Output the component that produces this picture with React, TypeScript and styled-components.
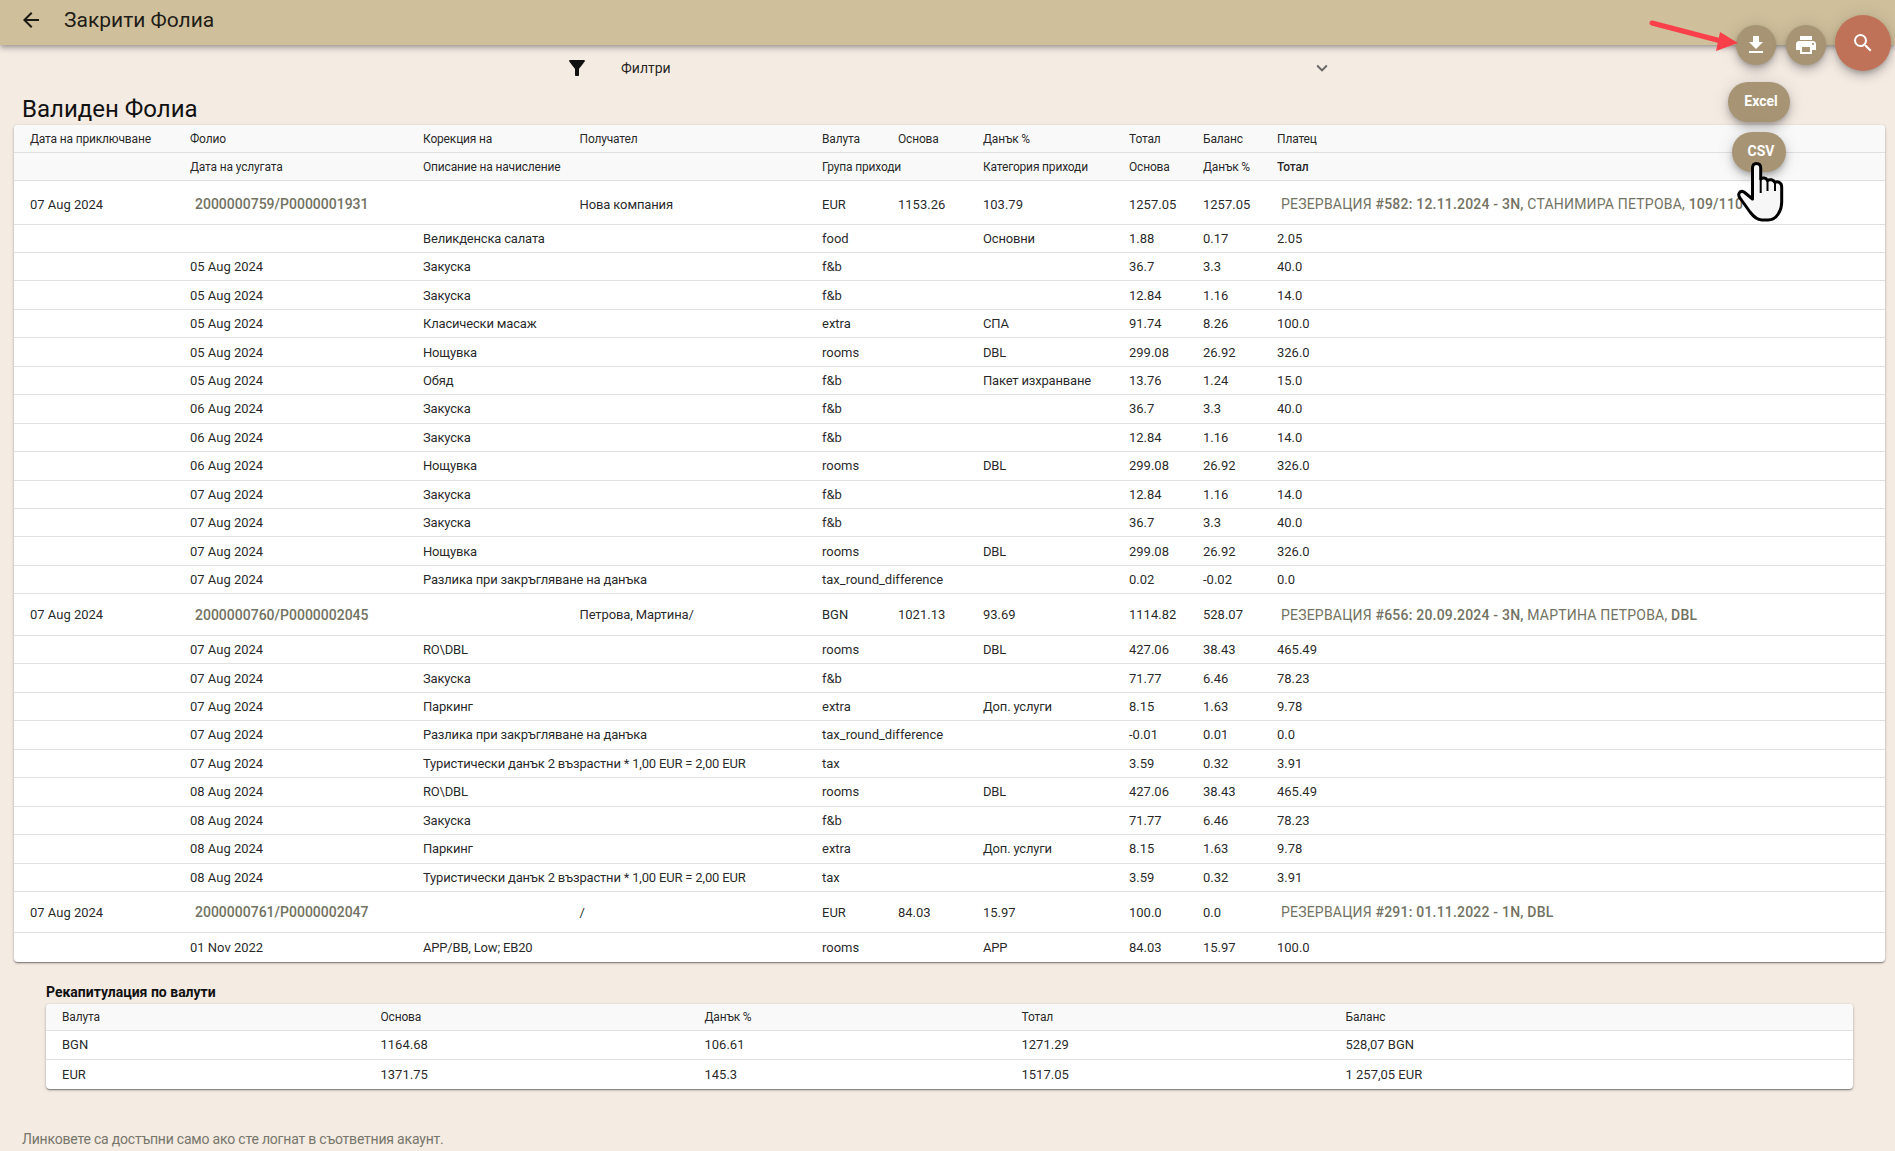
import React from "react";
import styled, { createGlobalStyle } from "styled-components";
import { MdArrowBack, MdFileDownload, MdPrint, MdSearch, MdFilterAlt, MdExpandMore } from "react-icons/md";

const Global = createGlobalStyle`
  html, body { margin: 0; padding: 0; }
  body { background: #f4ebe3; font-family: Roboto, "Noto Sans", sans-serif; color: rgba(0,0,0,.87); overflow: hidden; }
`;
const Page = styled.div`position: relative; width: 1895px; height: 1151px; overflow: hidden;`;
const TopBar = styled.header`
  height: 45px; background: #cfbf9b; display: flex; align-items: flex-start; padding: 8px 0 0 19px; box-sizing: border-box;
  box-shadow: 0 2px 4px -1px rgba(0,0,0,.2), 0 4px 5px 0 rgba(0,0,0,.14), 0 1px 10px 0 rgba(0,0,0,.12);
`;
const BackIcon = styled(MdArrowBack)`font-size: 24px; color: #1c1a14;`;
const TopTitle = styled.h1`margin: 0 0 0 21px; font-size: 21px; line-height: 24px; font-weight: 400; color: rgba(0,0,0,.87);`;
const FilterBar = styled.div`
  display: flex; align-items: center; height: 46px; width: 767px; margin-left: 566px; box-sizing: border-box;
`;
const FilterIcon = styled(MdFilterAlt)`font-size: 24px; color: #111; margin-right: 31px; margin-left: -1px;`;
const FilterLabel = styled.span`flex: 1; font-size: 14px; color: rgba(0,0,0,.87); padding-left: 1px;`;
const Chevron = styled(MdExpandMore)`font-size: 22px; color: #666;`;
const Heading = styled.h2`margin: 3px 0 1px 22px; font-size: 24px; line-height: 30px; font-weight: 400; color: #111;`;
const Card = styled.div`
  margin: ${p => p.$m}; background: #fff; border-radius: 4px; overflow: hidden;
  box-shadow: 0 2px 1px -1px rgba(0,0,0,.2), 0 1px 1px 0 rgba(0,0,0,.14), 0 1px 3px 0 rgba(0,0,0,.3);
`;
const Table = styled.table`width: 100%; table-layout: fixed; border-collapse: separate; border-spacing: 0;`;
const Cell = styled.td`
  padding: 0; font-size: 13px; white-space: nowrap; overflow: visible; border-bottom: 1px solid #e0e0e0; box-sizing: border-box;
  color: rgba(0,0,0,.87); vertical-align: middle; tr:last-child > & { border-bottom: 0; }
  &:first-child { padding-left: 16px; }
`;
const FolioCell = styled(Cell)`padding-top: ${p => p.$pad || 0}px; &:first-child { padding-top: ${p => p.$pad || 0}px; }`;
const TextCell = styled(Cell)`letter-spacing: -0.18px;`;
const FolioTextCell = styled(FolioCell)`letter-spacing: -0.12px;`;
const HeadCell = styled(Cell).attrs({ as: "th" })`
  font-size: 12px; letter-spacing: -0.17px; font-weight: ${p => (p.$strong ? 500 : 400)}; text-align: left; background: #f9f9f9; height: ${p => p.$h || 28}px;
  tr:last-child > & { border-bottom: 1px solid #e0e0e0; }
`;
const FolioLink = styled.a`
  font-size: 14px; font-weight: 500; color: #727262; padding-left: 5px; text-decoration: none;
`;
const Booking = styled.a`
  font-size: 14px; letter-spacing: .2px; color: #727262; padding-left: 4px; b { font-weight: 500; }
`;
const Row = styled.tr`height: ${p => p.$h}px;`;
const SummaryTitle = styled.h3`margin: 21px 0 0 46px; font-size: 14px; line-height: 18px; font-weight: 700; color: #111;`;
const Note = styled.p`margin: 42px 0 0 22px; font-size: 14px; letter-spacing: -0.2px; color: #76766a;`;
const Fab = styled.button`
  position: absolute; left: ${p => p.$x}px; top: ${p => p.$y}px; width: ${p => p.$w}px; height: ${p => p.$h}px;
  border: 0; padding: 0; border-radius: ${p => p.$h / 2}px; background: ${p => p.$bg || "#a69474"}; color: #fff;
  display: flex; align-items: center; justify-content: center;
  box-shadow: 0 3px 5px -1px rgba(0,0,0,.2), 0 6px 10px 0 rgba(0,0,0,.14), 0 1px 18px 0 rgba(0,0,0,.12);
`;
const FabLabel = styled(Fab)`font: 700 14px Roboto, sans-serif; padding: 0 0 2px 4px; box-sizing: border-box;`;
const Overlay = styled.svg`position: absolute; left: ${p => p.$x}px; top: ${p => p.$y}px; pointer-events: none;`;

const cols = [176, 233, 156.5, 242.5, 76, 85, 146, 74, 74, 608];
const scols = [334.5, 324, 317, 324, 507.5];

type D = [string, string, string, string, string, string, string];
type F = { close: string; folio: string; to: string; cur: string; base: string; tax: string; total: string; bal: string; booking: React.ReactNode; h: number; pad?: number; rows: D[] };

const folios: F[] = [
  {
    close: "07 Aug 2024", folio: "2000000759/P0000001931", to: "Нова компания", cur: "EUR", base: "1153.26", tax: "103.79", total: "1257.05", bal: "1257.05", h: 43.5, pad: 4,
    booking: <>РЕЗЕРВАЦИЯ <b>#582: 12.11.2024 - 3N,</b> СТАНИМИРА ПЕТРОВА, <b>109/110</b></>,
    rows: [
      ["", "Великденска салата", "food", "Основни", "1.88", "0.17", "2.05"],
      ["05 Aug 2024", "Закуска", "f&b", "", "36.7", "3.3", "40.0"],
      ["05 Aug 2024", "Закуска", "f&b", "", "12.84", "1.16", "14.0"],
      ["05 Aug 2024", "Класически масаж", "extra", "СПА", "91.74", "8.26", "100.0"],
      ["05 Aug 2024", "Нощувка", "rooms", "DBL", "299.08", "26.92", "326.0"],
      ["05 Aug 2024", "Обяд", "f&b", "Пакет изхранване", "13.76", "1.24", "15.0"],
      ["06 Aug 2024", "Закуска", "f&b", "", "36.7", "3.3", "40.0"],
      ["06 Aug 2024", "Закуска", "f&b", "", "12.84", "1.16", "14.0"],
      ["06 Aug 2024", "Нощувка", "rooms", "DBL", "299.08", "26.92", "326.0"],
      ["07 Aug 2024", "Закуска", "f&b", "", "12.84", "1.16", "14.0"],
      ["07 Aug 2024", "Закуска", "f&b", "", "36.7", "3.3", "40.0"],
      ["07 Aug 2024", "Нощувка", "rooms", "DBL", "299.08", "26.92", "326.0"],
      ["07 Aug 2024", "Разлика при закръгляване на данъка", "tax_round_difference", "", "0.02", "-0.02", "0.0"],
    ],
  },
  {
    close: "07 Aug 2024", folio: "2000000760/P0000002045", to: "Петрова, Мартина/", cur: "BGN", base: "1021.13", tax: "93.69", total: "1114.82", bal: "528.07", h: 41.5,
    booking: <>РЕЗЕРВАЦИЯ <b>#656: 20.09.2024 - 3N,</b> МАРТИНА ПЕТРОВА, <b>DBL</b></>,
    rows: [
      ["07 Aug 2024", "RO\\DBL", "rooms", "DBL", "427.06", "38.43", "465.49"],
      ["07 Aug 2024", "Закуска", "f&b", "", "71.77", "6.46", "78.23"],
      ["07 Aug 2024", "Паркинг", "extra", "Доп. услуги", "8.15", "1.63", "9.78"],
      ["07 Aug 2024", "Разлика при закръгляване на данъка", "tax_round_difference", "", "-0.01", "0.01", "0.0"],
      ["07 Aug 2024", "Туристически данък 2 възрастни * 1,00 EUR = 2,00 EUR", "tax", "", "3.59", "0.32", "3.91"],
      ["08 Aug 2024", "RO\\DBL", "rooms", "DBL", "427.06", "38.43", "465.49"],
      ["08 Aug 2024", "Закуска", "f&b", "", "71.77", "6.46", "78.23"],
      ["08 Aug 2024", "Паркинг", "extra", "Доп. услуги", "8.15", "1.63", "9.78"],
      ["08 Aug 2024", "Туристически данък 2 възрастни * 1,00 EUR = 2,00 EUR", "tax", "", "3.59", "0.32", "3.91"],
    ],
  },
  {
    close: "07 Aug 2024", folio: "2000000761/P0000002047", to: "/", cur: "EUR", base: "84.03", tax: "15.97", total: "100.0", bal: "0.0", h: 41.5,
    booking: <>РЕЗЕРВАЦИЯ <b>#291: 01.11.2022 - 1N, DBL</b></>,
    rows: [["01 Nov 2022", "APP/BB, Low; EB20", "rooms", "APP", "84.03", "15.97", "100.0"]],
  },
];

const summary = [
  ["BGN", "1164.68", "106.61", "1271.29", "528,07 BGN"],
  ["EUR", "1371.75", "145.3", "1517.05", "1 257,05 EUR"],
];

export default function App() {
  return (
    <Page>
      <Global />
      <TopBar>
        <BackIcon />
        <TopTitle>Закрити Фолиа</TopTitle>
      </TopBar>
      <FilterBar>
        <FilterIcon />
        <FilterLabel>Филтри</FilterLabel>
        <Chevron />
      </FilterBar>
      <Heading>Валиден Фолиа</Heading>
      <Card $m="0 10px 0 14px">
        <Table>
          <colgroup>{cols.map((w, i) => <col key={i} style={{ width: w }} />)}</colgroup>
          <thead>
            <tr>
              <HeadCell>Дата на приключване</HeadCell>
              <HeadCell>Фолио</HeadCell>
              <HeadCell>Корекция на</HeadCell>
              <HeadCell>Получател</HeadCell>
              <HeadCell>Валута</HeadCell>
              <HeadCell>Основа</HeadCell>
              <HeadCell>Данък %</HeadCell>
              <HeadCell>Тотал</HeadCell>
              <HeadCell>Баланс</HeadCell>
              <HeadCell>Платец</HeadCell>
            </tr>
            <tr>
              <HeadCell />
              <HeadCell>Дата на услугата</HeadCell>
              <HeadCell colSpan={2}>Описание на начисление</HeadCell>
              <HeadCell colSpan={2}>Група приходи</HeadCell>
              <HeadCell>Категория приходи</HeadCell>
              <HeadCell>Основа</HeadCell>
              <HeadCell>Данък %</HeadCell>
              <HeadCell $strong>Тотал</HeadCell>
            </tr>
          </thead>
          <tbody>
            {folios.map(f => (
              <React.Fragment key={f.folio}>
                <Row $h={f.h}>
                  <FolioCell $pad={f.pad}>{f.close}</FolioCell>
                  <FolioCell $pad={f.pad}><FolioLink>{f.folio}</FolioLink></FolioCell>
                  <FolioCell $pad={f.pad} />
                  <FolioTextCell $pad={f.pad}>{f.to}</FolioTextCell>
                  <FolioCell $pad={f.pad}>{f.cur}</FolioCell>
                  <FolioCell $pad={f.pad}>{f.base}</FolioCell>
                  <FolioCell $pad={f.pad}>{f.tax}</FolioCell>
                  <FolioCell $pad={f.pad}>{f.total}</FolioCell>
                  <FolioCell $pad={f.pad}>{f.bal}</FolioCell>
                  <FolioCell $pad={f.pad}><Booking>{f.booking}</Booking></FolioCell>
                </Row>
                {f.rows.map((r, i) => (
                  <Row $h={28.46} key={i}>
                    <Cell />
                    <Cell>{r[0]}</Cell>
                    <TextCell colSpan={2}>{r[1]}</TextCell>
                    <Cell colSpan={2}>{r[2]}</Cell>
                    <TextCell>{r[3]}</TextCell>
                    <Cell>{r[4]}</Cell>
                    <Cell>{r[5]}</Cell>
                    <Cell>{r[6]}</Cell>
                  </Row>
                ))}
              </React.Fragment>
            ))}
          </tbody>
        </Table>
      </Card>
      <SummaryTitle>Рекапитулация по валути</SummaryTitle>
      <Card $m="3px 42px 0 46px">
        <Table>
          <colgroup>{scols.map((w, i) => <col key={i} style={{ width: w }} />)}</colgroup>
          <thead>
            <tr>
              <HeadCell $h={27}>Валута</HeadCell>
              <HeadCell $h={27}>Основа</HeadCell>
              <HeadCell $h={27}>Данък %</HeadCell>
              <HeadCell $h={27}>Тотал</HeadCell>
              <HeadCell $h={27}>Баланс</HeadCell>
            </tr>
          </thead>
          <tbody>
            {summary.map(s => (
              <Row $h={29} key={s[0]}>
                {s.map((v, i) => <Cell key={i}>{v}</Cell>)}
              </Row>
            ))}
          </tbody>
        </Table>
      </Card>
      <Note>Линковете са достъпни само ако сте логнат в съответния акаунт.</Note>

      <Fab $x={1736} $y={25} $w={40} $h={40}><MdFileDownload size={24} /></Fab>
      <Fab $x={1786} $y={25} $w={40} $h={40}><MdPrint size={24} /></Fab>
      <Fab $x={1835} $y={15} $w={56} $h={56} $bg="#c07258"><MdSearch size={24} /></Fab>
      <FabLabel $x={1728} $y={82} $w={62} $h={40}>Excel</FabLabel>
      <FabLabel $x={1732} $y={132} $w={54} $h={40}>CSV</FabLabel>
      <Overlay $x={1645} $y={15} width={100} height={45} viewBox="0 0 100 45">
        <path d="M7 8 L76 26" stroke="#f9404a" strokeWidth="5" strokeLinecap="round" fill="none" />
        <path d="M93 28 L71 36 L75 17 Z" fill="#f9404a" />
      </Overlay>
      <Overlay $x={1735} $y={160} width={60} height={65} viewBox="0 0 60 65">
        <path d="M17.5 8 C17.5 5 19 3.5 21.5 3.5 C24 3.5 25.7 5 25.7 8 V19 C27.5 17.5 31 17.5 32.5 20.5 C34.5 19 38.5 19.5 40 22.5 C42 21 46.7 22 46.7 27 V42 C46.7 50 42 60 33 60 H27 C22 60 19 57 15 52 L5 38 C2 34 5 30 9 32 L17.5 39 Z" fill="#f7f7f7" stroke="#000" strokeWidth="3" strokeLinejoin="round" />
        <path d="M32.5 21 V31 M40 23 V31 M25.7 19 V33" stroke="#000" strokeWidth="2" fill="none" />
      </Overlay>
    </Page>
  );
}
